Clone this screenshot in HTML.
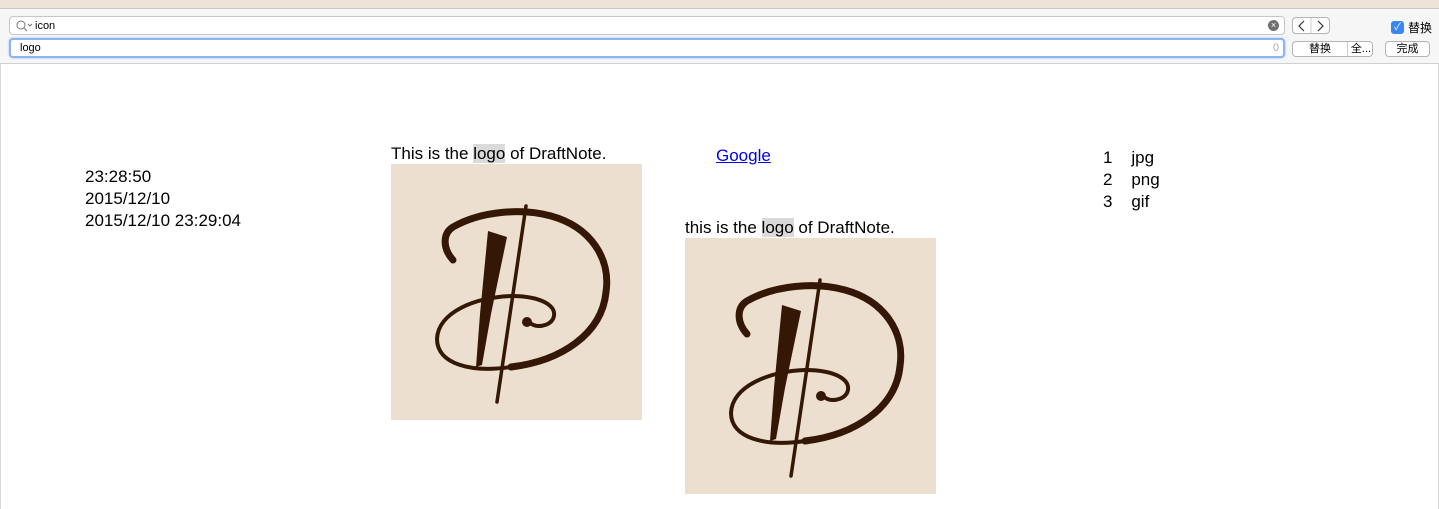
<!DOCTYPE html>
<html><head><meta charset="utf-8"><style>
*{margin:0;padding:0;box-sizing:border-box}
body{width:1439px;height:509px;overflow:hidden;background:#fff;font-family:"Liberation Sans","Noto Sans CJK SC",sans-serif;position:relative;color:#000}
.top{position:absolute;left:0;top:0;width:1439px;height:9px;background:#ede3d6;border-bottom:1px solid #c8c8c8}
.bar{position:absolute;left:0;top:9px;width:1439px;height:55px;background:#f6f6f6;border-bottom:1px solid #d0d0d0}
.in{position:absolute;background:#fff;border:1px solid #c6c6c6;border-radius:4px;font-size:11px;line-height:16px}
.btn{position:absolute;background:#fff;border:1px solid #b4b4b4;border-radius:4px;font-size:11px;text-align:center;line-height:13px}
.t{position:absolute;font-size:17px;line-height:22px;white-space:nowrap}
.hl{background:#dadada}
.frame{position:absolute;left:0;top:64px;width:1439px;height:445px;border-left:1px solid #d8d8d8;border-right:1px solid #d8d8d8}
</style></head><body>
<div class="top"></div>
<div class="bar">
 <div class="in" style="left:9px;top:7px;width:1276px;height:19px">
  <svg style="position:absolute;left:6px;top:3px" width="18" height="12"><circle cx="5" cy="5" r="4" fill="none" stroke="#777" stroke-width="1"/><line x1="8" y1="8" x2="11" y2="11" stroke="#777"/><path d="M12 4l2 2 2-2" fill="none" stroke="#777"/></svg>
  <span style="position:absolute;left:25px;top:1px">icon</span>
  <span style="position:absolute;right:5px;top:3px;width:11px;height:11px;border-radius:50%;background:#707070;color:#fff;font-size:9px;line-height:11px;text-align:center">×</span>
 </div>
 <div class="in" style="left:9px;top:29px;width:1276px;height:20px;border:2px solid #8db4ef;box-shadow:0 0 2px #9bc0f4">
  <span style="position:absolute;left:9px;top:0">logo</span>
  <span style="position:absolute;right:4px;top:0;color:#aaa">0</span>
 </div>
 <div class="btn" style="left:1292px;top:8px;width:38px;height:17px"><svg width="36" height="15"><path d="M11 3l-5 5 5 5M25 3l5 5-5 5" fill="none" stroke="#333" stroke-width="1.2"/><line x1="18" y1="0" x2="18" y2="15" stroke="#ccc"/></svg></div>
 <div style="position:absolute;left:1391px;top:12px;width:13px;height:13px;background:#3b86f5;border-radius:3px;color:#fff;font-size:10px;line-height:13px;text-align:center">✓</div>
 <span style="position:absolute;left:1408px;top:10px;font-size:12px">替换</span>
 <div class="btn" style="left:1292px;top:32px;width:81px;height:16px"><span style="position:absolute;left:0;width:54px;top:1px">替换</span><span style="position:absolute;left:54px;top:0;height:14px;border-left:1px solid #ccc;width:27px;padding-top:1px">全...</span></div>
 <div class="btn" style="left:1385px;top:32px;width:45px;height:16px;padding-top:1px">完成</div>
</div>
<div class="frame"></div>
<div class="t" style="left:85px;top:166px">23:28:50</div>
<div class="t" style="left:85px;top:188px">2015/12/10</div>
<div class="t" style="left:85px;top:210px">2015/12/10 23:29:04</div>
<div class="t" style="left:391px;top:143px">This is the <span class="hl">logo</span> of DraftNote.</div>
<div class="t" style="left:716px;top:145px"><a style="color:#0000ee;text-decoration:underline">Google</a></div>
<div class="t" style="left:685px;top:217px">this is the <span class="hl">logo</span> of DraftNote.</div>
<div class="t" style="left:1103px;top:147px">1&nbsp;&nbsp;&nbsp;&nbsp;jpg</div>
<div class="t" style="left:1103px;top:169px">2&nbsp;&nbsp;&nbsp;&nbsp;png</div>
<div class="t" style="left:1103px;top:191px">3&nbsp;&nbsp;&nbsp;&nbsp;gif</div>
<svg width="0" height="0" style="position:absolute"><defs><g id="lg">
<rect width="251" height="256" fill="#ecdfcf"/>
<g fill="none" stroke="#341705" stroke-linecap="round">
<path d="M62 96 C52 85 51 70 62 63 C90 47 130 44 160 52 C200 63 220 95 215 128 C211 170 170 197 120 203" stroke-width="7"/>
<path d="M120 203 C80 209 46 200 46 175 C47 148 85 133 120 132 C150 132 168 142 162 155 C158 162 145 165 138 158" stroke-width="4"/>
<circle cx="136" cy="158" r="5" fill="#341705" stroke="none"/>
<path d="M135 42 L106 238" stroke-width="3.5"/>
</g>
<path d="M97 67 L116 73 L100 150 L91 201 L85 203 L89 150 Z" fill="#341705"/>
</g></defs></svg>
<svg style="position:absolute;left:391px;top:164px" width="251" height="256"><use href="#lg"/></svg>
<svg style="position:absolute;left:685px;top:238px" width="251" height="256"><use href="#lg"/></svg>
</body></html>
